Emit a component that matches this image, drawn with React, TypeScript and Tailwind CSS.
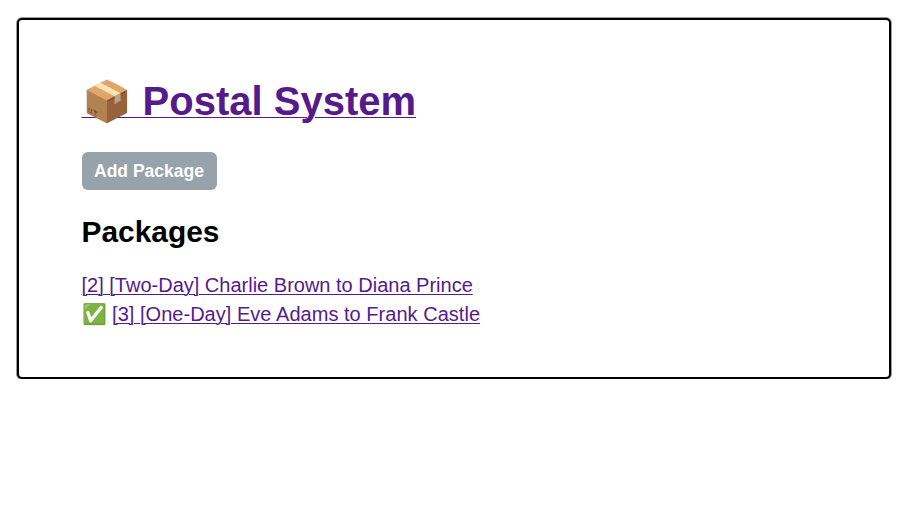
export default function App() {
  return (
    <main className="mt-[18px] mr-[22px] ml-[17px] h-[361px] w-[874px] rounded-[5px] border-2 border-black bg-white px-[62.5px] pt-[54px] font-['Liberation_Sans',Arial,sans-serif] text-black shadow-[0_0_0_1px_#999999]">
      <h1 className="text-[40px] leading-[54px] font-bold">
        <a href="#" className="text-[#551a8b] underline decoration-1 underline-offset-[2px]">📦 Postal System</a>
      </h1>
      <button className="mt-[24px] block h-[37.5px] w-[135px] rounded-[6px] bg-[#98a2ab] pt-px text-[17.5px] font-bold text-white">Add Package</button>
      <h2 className="mt-[24.5px] text-[29.9px] leading-[36px] font-bold">Packages</h2>
      <ul className="mt-[21px] text-[20px] leading-[29px]">
        <li><a href="#" className="text-[#551a8b] underline decoration-1 underline-offset-[2px]">[2] [Two-Day] Charlie Brown to Diana Prince</a></li>
        <li>✅ <a href="#" className="tracking-[0.03px] text-[#551a8b] underline decoration-1 underline-offset-[2px]">[3] [One-Day] Eve Adams to Frank Castle</a></li>
      </ul>
    </main>
  );
}
